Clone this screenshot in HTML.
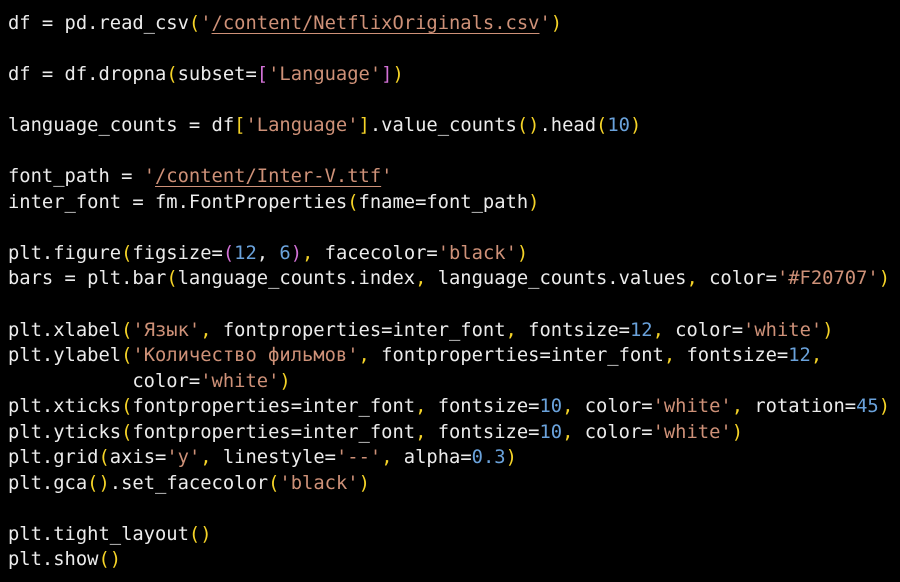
<!DOCTYPE html>
<html><head><meta charset="utf-8"><style>
html,body{margin:0;padding:0;background:#000;width:900px;height:582px;overflow:hidden}
pre{margin:0;padding:11px 0 0 8px;font-family:"DejaVu Sans Mono","Liberation Mono",monospace;font-size:18.8px;line-height:25.55px;color:#ececec;letter-spacing:0}
.s{color:#ce9178}.y{color:#f5d327}.p{color:#d271d6}.n{color:#6aa2db}.u{text-decoration:underline;text-underline-offset:4px}
</style></head><body><pre>df = pd.read_csv<span class="y">(</span><span class="s">'<span class="u">/content/NetflixOriginals.csv</span>'</span><span class="y">)</span>

df = df.dropna<span class="y">(</span>subset=<span class="p">[</span><span class="s">'Language'</span><span class="p">]</span><span class="y">)</span>

language_counts = df<span class="y">[</span><span class="s">'Language'</span><span class="y">]</span>.value_counts<span class="y">()</span>.head<span class="y">(</span><span class="n">10</span><span class="y">)</span>

font_path = <span class="s">'<span class="u">/content/Inter-V.ttf</span>'</span>
inter_font = fm.FontProperties<span class="y">(</span>fname=font_path<span class="y">)</span>

plt.figure<span class="y">(</span>figsize=<span class="p">(</span><span class="n">12</span>, <span class="n">6</span><span class="p">)</span><span class="y">,</span> facecolor=<span class="s">'black'</span><span class="y">)</span>
bars = plt.bar<span class="y">(</span>language_counts.index<span class="y">,</span> language_counts.values<span class="y">,</span> color=<span class="s">'#F20707'</span><span class="y">)</span>

plt.xlabel<span class="y">(</span><span class="s">'Язык'</span><span class="y">,</span> fontproperties=inter_font<span class="y">,</span> fontsize=<span class="n">12</span><span class="y">,</span> color=<span class="s">'white'</span><span class="y">)</span>
plt.ylabel<span class="y">(</span><span class="s">'Количество фильмов'</span><span class="y">,</span> fontproperties=inter_font<span class="y">,</span> fontsize=<span class="n">12</span><span class="y">,</span>
           color=<span class="s">'white'</span><span class="y">)</span>
plt.xticks<span class="y">(</span>fontproperties=inter_font<span class="y">,</span> fontsize=<span class="n">10</span><span class="y">,</span> color=<span class="s">'white'</span><span class="y">,</span> rotation=<span class="n">45</span><span class="y">)</span>
plt.yticks<span class="y">(</span>fontproperties=inter_font<span class="y">,</span> fontsize=<span class="n">10</span><span class="y">,</span> color=<span class="s">'white'</span><span class="y">)</span>
plt.grid<span class="y">(</span>axis=<span class="s">'y'</span><span class="y">,</span> linestyle=<span class="s">'--'</span><span class="y">,</span> alpha=<span class="n">0.3</span><span class="y">)</span>
plt.gca<span class="y">()</span>.set_facecolor<span class="y">(</span><span class="s">'black'</span><span class="y">)</span>

plt.tight_layout<span class="y">()</span>
plt.show<span class="y">()</span></pre></body></html>
